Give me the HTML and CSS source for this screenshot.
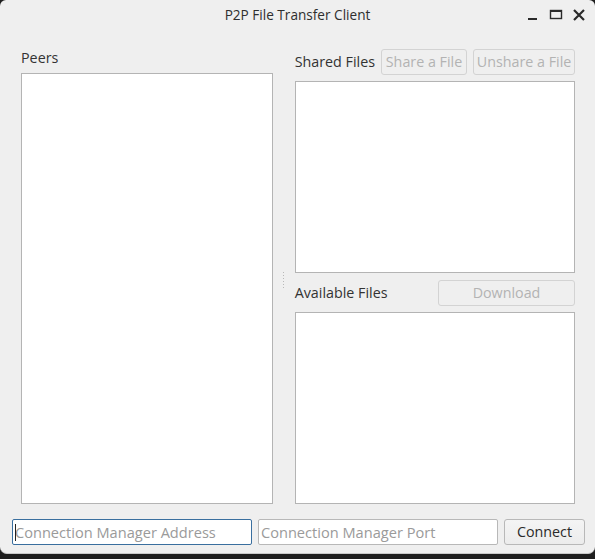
FILE: index.html
```html
<!DOCTYPE html>
<html>
<head>
<meta charset="utf-8">
<link rel="stylesheet" href="styles.css">
</head>
<body>
<div class="window">
  <div class="titlebar">
    <div class="title">P2P File Transfer Client</div>
    <div class="controls">
      <svg class="ctl" width="14" height="14" viewBox="0 0 14 14"><rect x="2" y="10" width="9" height="2" fill="#2a2a2a"/></svg>
      <svg class="ctl" width="14" height="14" viewBox="0 0 14 14"><rect x="1.5" y="2.5" width="11" height="8" fill="none" stroke="#2a2a2a" stroke-width="1.4"/><rect x="1" y="2" width="12" height="2" fill="#2a2a2a"/></svg>
      <svg class="ctl" width="14" height="14" viewBox="0 0 14 14"><path d="M2 2 L12 12 M12 2 L2 12" stroke="#2a2a2a" stroke-width="2.2" fill="none"/></svg>
    </div>
  </div>
  <div class="main">
    <div class="left">
      <div class="label peers">Peers</div>
      <div class="list"></div>
    </div>
    <div class="splitter"><div class="dots"></div></div>
    <div class="right">
      <div class="section shared">
        <div class="row">
          <div class="label">Shared Files</div>
          <button class="btn disabled share">Share a File</button>
          <button class="btn disabled unshare">Unshare a File</button>
        </div>
        <div class="list"></div>
      </div>
      <div class="section available">
        <div class="row">
          <div class="label grow">Available Files</div>
          <button class="btn disabled download">Download</button>
        </div>
        <div class="list"></div>
      </div>
    </div>
  </div>
  <div class="bottom">
    <div class="input focused"><span class="caret"></span><span class="ph">Connection Manager Address</span></div>
    <div class="input"><span class="ph">Connection Manager Port</span></div>
    <button class="btn connect">Connect</button>
  </div>
</div>
</body>
</html>
```

FILE: styles.css
```css
html, body {
  margin: 0;
  padding: 0;
}
body {
  width: 595px;
  height: 559px;
  background: #1e1e1e;
  overflow: hidden;
  font-family: "Open Sans", "Noto Sans", sans-serif;
  font-size: 14px;
  color: #333333;
}
.window {
  box-sizing: border-box;
  height: 554px;
  background: #efefef;
  border-bottom: 1px solid #c9c9c9;
  border-radius: 6px 6px 7px 7px;
  display: flex;
  flex-direction: column;
}
.titlebar {
  height: 30px;
  position: relative;
  display: flex;
  align-items: center;
  justify-content: center;
}
.title {
  font-size: 13.6px;
  color: #2e2e2e;
  margin-top: -2px;
}
.controls {
  position: absolute;
  right: 9px;
  top: 8px;
  display: flex;
  gap: 9px;
}
.ctl { display: block; }
.main {
  display: flex;
  padding: 17px 20px 0 21px;
  height: 474px;
  box-sizing: border-box;
}
.left {
  width: 252px;
  display: flex;
  flex-direction: column;
}
.label {
  line-height: 20px;
  color: #333333;
  white-space: nowrap;
  font-size: 14.3px;
}
.peers {
  height: 20px;
  margin-bottom: 5px;
  margin-top: 1px;
}
.list {
  background: #ffffff;
  border: 1px solid #b4b4b4;
  box-sizing: border-box;
}
.left .list { flex: 1; }
.splitter {
  width: 22px;
  display: flex;
  align-items: center;
  justify-content: center;
}
.dots {
  width: 1px;
  height: 16px;
  margin-top: 8px;
  background: repeating-linear-gradient(to bottom, #b8b8b8 0 1px, transparent 1px 3px);
}
.right {
  flex: 1;
  display: flex;
  flex-direction: column;
  padding-top: 2px;
}
.section {
  display: flex;
  flex-direction: column;
}
.shared { height: 224px; margin-bottom: 7px; }
.available { flex: 1; }
.section .list { flex: 1; }
.row {
  display: flex;
  align-items: center;
  height: 26px;
  gap: 6px;
  margin-bottom: 6px;
}
.grow { flex: 1; }
.btn {
  font-family: inherit;
  font-size: 14.3px;
  line-height: 22px;
  height: 26px;
  box-sizing: border-box;
  border: 1px solid #bdbdbd;
  border-radius: 3px;
  background: linear-gradient(#f4f4f4, #ececec);
  padding: 0 0 1px 0;
  color: #333333;
}
.btn.disabled {
  color: #b3b3b3;
  border-color: #d3d3d3;
  background: #efefef;
}
.share { width: 86px; }
.unshare { width: 102px; }
.download { width: 137px; }
.bottom {
  display: flex;
  gap: 6px;
  padding: 15px 0 0 12px;
  height: 26px;
}
.input {
  width: 240px;
  height: 26px;
  box-sizing: border-box;
  border: 1px solid #b8b8b8;
  border-radius: 2px;
  background: #ffffff;
  display: flex;
  align-items: center;
  padding-left: 2px;
  position: relative;
}
.input.focused {
  border-color: #3a6f9f;
}
.caret {
  position: absolute;
  left: 2px;
  top: 4px;
  width: 1px;
  height: 17px;
  background: #222;
}
.ph {
  color: #9a9a9a;
  white-space: nowrap;
  font-size: 14.6px;
}
.connect {
  width: 81px;
  border-color: #b8b8b8;
  color: #2a2a2a;
}
```
